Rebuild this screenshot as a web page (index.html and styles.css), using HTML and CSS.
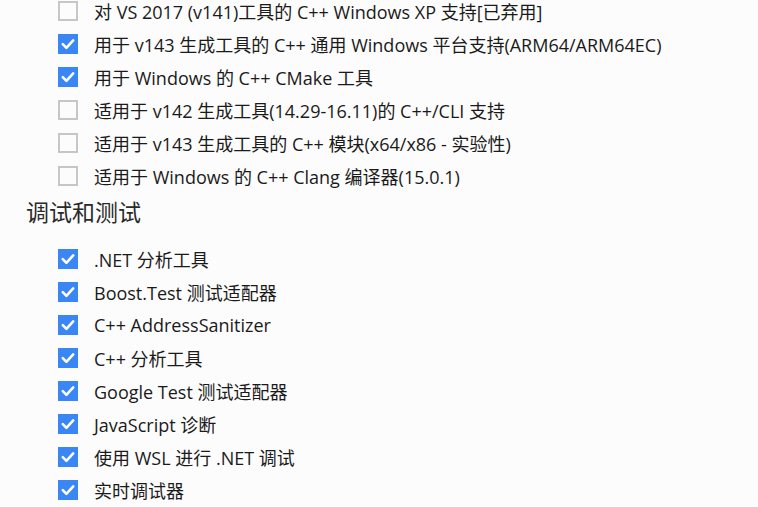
FILE: index.html
```html
<!DOCTYPE html>
<html lang="zh-CN">
<head>
<meta charset="utf-8">
<title>调试和测试</title>
<link rel="stylesheet" href="styles.css">
</head>
<body>
<div class="page">
  <ul class="opts">
    <li class="opt"><span class="box"></span><span class="label">对 VS 2017 (v141)工具的 C++ Windows XP 支持[已弃用]</span></li>
    <li class="opt"><span class="box checked"><svg viewBox="0 0 20 20"><polyline points="4.8,10.2 8.4,13.8 15.2,6.4"/></svg></span><span class="label">用于 v143 生成工具的 C++ 通用 Windows 平台支持(ARM64/ARM64EC)</span></li>
    <li class="opt"><span class="box checked"><svg viewBox="0 0 20 20"><polyline points="4.8,10.2 8.4,13.8 15.2,6.4"/></svg></span><span class="label">用于 Windows 的 C++ CMake 工具</span></li>
    <li class="opt"><span class="box"></span><span class="label">适用于 v142 生成工具(14.29-16.11)的 C++/CLI 支持</span></li>
    <li class="opt"><span class="box"></span><span class="label">适用于 v143 生成工具的 C++ 模块(x64/x86 - 实验性)</span></li>
    <li class="opt"><span class="box"></span><span class="label">适用于 Windows 的 C++ Clang 编译器(15.0.1)</span></li>
  </ul>
  <h2 class="section-title">调试和测试</h2>
  <ul class="opts">
    <li class="opt"><span class="box checked"><svg viewBox="0 0 20 20"><polyline points="4.8,10.2 8.4,13.8 15.2,6.4"/></svg></span><span class="label">.NET 分析工具</span></li>
    <li class="opt"><span class="box checked"><svg viewBox="0 0 20 20"><polyline points="4.8,10.2 8.4,13.8 15.2,6.4"/></svg></span><span class="label">Boost.Test 测试适配器</span></li>
    <li class="opt"><span class="box checked"><svg viewBox="0 0 20 20"><polyline points="4.8,10.2 8.4,13.8 15.2,6.4"/></svg></span><span class="label">C++ AddressSanitizer</span></li>
    <li class="opt"><span class="box checked"><svg viewBox="0 0 20 20"><polyline points="4.8,10.2 8.4,13.8 15.2,6.4"/></svg></span><span class="label">C++ 分析工具</span></li>
    <li class="opt"><span class="box checked"><svg viewBox="0 0 20 20"><polyline points="4.8,10.2 8.4,13.8 15.2,6.4"/></svg></span><span class="label">Google Test 测试适配器</span></li>
    <li class="opt"><span class="box checked"><svg viewBox="0 0 20 20"><polyline points="4.8,10.2 8.4,13.8 15.2,6.4"/></svg></span><span class="label">JavaScript 诊断</span></li>
    <li class="opt"><span class="box checked"><svg viewBox="0 0 20 20"><polyline points="4.8,10.2 8.4,13.8 15.2,6.4"/></svg></span><span class="label">使用 WSL 进行 .NET 调试</span></li>
    <li class="opt"><span class="box checked"><svg viewBox="0 0 20 20"><polyline points="4.8,10.2 8.4,13.8 15.2,6.4"/></svg></span><span class="label">实时调试器</span></li>
  </ul>
</div>
</body>
</html>
```

FILE: styles.css
```css
html, body {
  margin: 0;
  padding: 0;
  background: #fcfcfc;
  overflow: hidden;
}
body {
  font-family: "Open Sans", "Noto Sans CJK SC", sans-serif;
  color: #1a1a1a;
}
.page {
  margin-top: -6px;
}
.opts {
  list-style: none;
  margin: 0;
  padding: 0 0 0 58px;
}
.opt {
  height: 33px;
  display: flex;
  align-items: center;
  gap: 16px;
  font-size: 18px;
}
.box {
  width: 20px;
  height: 20px;
  box-sizing: border-box;
  border: 2px solid #c6c6c6;
  background: #fcfcfc;
  flex: none;
}
.box.checked {
  border: none;
  background: #3a86f4;
}
.box svg {
  width: 20px;
  height: 20px;
  display: block;
}
.box polyline {
  fill: none;
  stroke: #ffffff;
  stroke-width: 2.6;
  stroke-linecap: round;
  stroke-linejoin: round;
}
.label {
  white-space: nowrap;
}
.section-title {
  margin: 0;
  height: 50px;
  box-sizing: border-box;
  padding: 4px 0 0 26px;
  font-size: 23px;
  line-height: 32px;
  font-weight: 400;
  color: #2a2a2a;
}
```
